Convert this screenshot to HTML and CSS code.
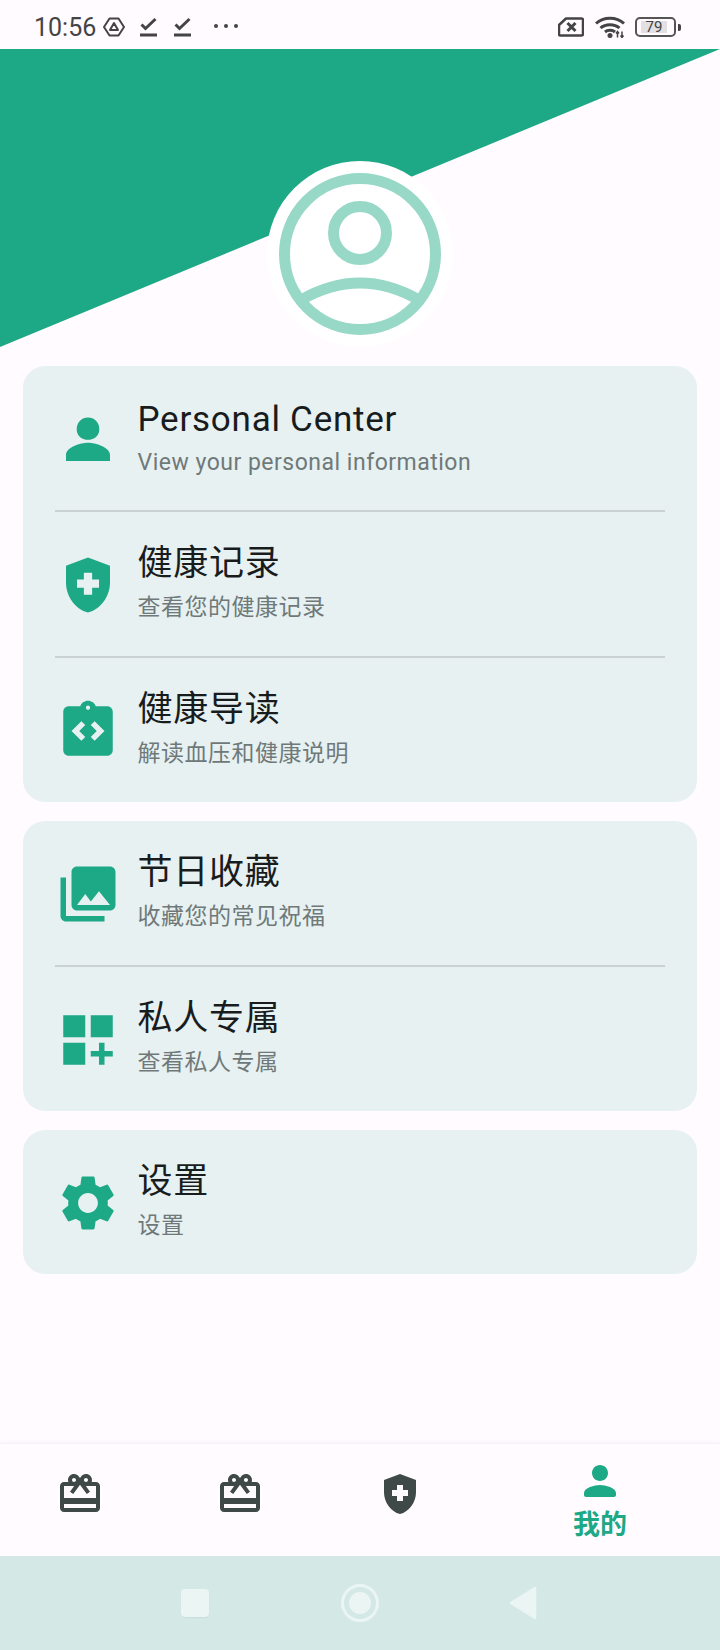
FILE: index.html
```html
<!DOCTYPE html>
<html lang="en">
<head>
    <meta charset="UTF-8">
    <meta name="viewport" content="width=device-width, initial-scale=1.0">
    <title>Profile</title>
    <link rel="stylesheet" href="styles.css">
</head>
<body>
    <div class="page">
        <div class="status-bar">
            <div class="status-left">
                <span class="clock">10:56</span>
                <svg class="st-hex" viewBox="0 0 22 20"><path d="M6.500 1.500h9L21 10l-5.500 8.500h-9L1 10z" fill="none" stroke="#444" stroke-width="2" stroke-linejoin="round"/><path d="M11 6l4 7H7z" fill="none" stroke="#444" stroke-width="2" stroke-linejoin="round"/></svg>
                <svg class="st-check" viewBox="0 0 17 20"><path d="M1.500 7.500l4 4L15.500 2" fill="none" stroke="#444" stroke-width="3"/><rect x="0" y="16.500" width="17" height="3" fill="#444"/></svg>
                <svg class="st-check" viewBox="0 0 17 20"><path d="M1.500 7.500l4 4L15.500 2" fill="none" stroke="#444" stroke-width="3"/><rect x="0" y="16.500" width="17" height="3" fill="#444"/></svg>
                <span class="st-dots"><i></i><i></i><i></i></span>
            </div>
            <div class="status-right">
                <svg class="st-sim" viewBox="0 0 26 20"><path d="M8 1.500h15.500a1.500 1.500 0 0 1 1.500 1.500v14a1.500 1.500 0 0 1-1.500 1.500H2.500A1.500 1.500 0 0 1 1 17V8z" fill="none" stroke="#444" stroke-width="2.500" stroke-linejoin="round"/><path d="M9.500 6l8 8M17.500 6l-8 8" stroke="#444" stroke-width="3"/></svg>
                <svg class="st-wifi" viewBox="0 0 30 22"><path d="M1 7.500C8.500 .5 21.500 .5 29 7.500" fill="none" stroke="#444" stroke-width="3"/><path d="M5.500 12C10.500 7.500 19.500 7.500 24.500 12" fill="none" stroke="#444" stroke-width="3"/><path d="M10 16c2.500-2.200 7.500-2.200 10 0" fill="none" stroke="#444" stroke-width="3"/><circle cx="15" cy="19.500" r="2.500" fill="#444"/><path d="M22.500 21.500v-6M21 17.500l1.500-2 1.500 2M27 15.500v6M25.500 19.500l1.500 2 1.500-2" fill="none" stroke="#444" stroke-width="1.500"/></svg>
                <div class="st-battery">
                    <span class="st-level">79</span>
                </div>
                <span class="st-nub"></span>
            </div>
        </div>

        <div class="header">
            <div class="avatar">
                <svg viewBox="0 0 186 186" width="186" height="186">
                    <circle cx="93" cy="93" r="75.500" fill="none" stroke="#98d8c7" stroke-width="11"/>
                    <circle cx="93" cy="72" r="26.500" fill="none" stroke="#98d8c7" stroke-width="11"/>
                    <path d="M34 139Q93 105 152 139" fill="none" stroke="#98d8c7" stroke-width="11"/>
                </svg>
            </div>
        </div>

        <div class="cards">
            <div class="card">
                <div class="row">
                    <svg class="row-icon" viewBox="0 0 24 24"><path d="M12 4.200a4.100 4.100 0 0 1 4.100 4.100v.300c0 2-1.800 3.700-4.100 3.700s-4.100-1.700-4.100-3.700v-.300A4.100 4.100 0 0 1 12 4.200zM4 20v-2.200c0-2.700 5.300-4.400 8-4.400s8 1.700 8 4.400V20z"/></svg>
                    <div class="row-text latin">
                        <div class="row-title">Personal Center</div>
                        <div class="row-sub">View your personal information</div>
                    </div>
                </div>
                <div class="row">
                    <svg class="row-icon" viewBox="0 0 24 24"><path fill-rule="evenodd" d="M10.500 13H8v-3h2.500V7.500h3V10H16v3h-2.500v2.500h-3V13zM12 2L4 5v6.090c0 5.050 3.410 9.760 8 10.910 4.590-1.150 8-5.860 8-10.910V5l-8-3z"/></svg>
                    <div class="row-text">
                        <div class="row-title">健康记录</div>
                        <div class="row-sub">查看您的健康记录</div>
                    </div>
                </div>
                <div class="row">
                    <svg class="row-icon" viewBox="0 0 24 24"><path fill-rule="evenodd" d="M19 3h-4.180C14.400 1.840 13.300 1 12 1s-2.400.840-2.820 2H5c-1.100 0-2 .900-2 2v14c0 1.100.900 2 2 2h14c1.100 0 2-.900 2-2V5c0-1.100-.900-2-2-2zm-7-.250c.410 0 .750.340.750.750s-.340.750-.750.750-.750-.340-.750-.750.340-.750.750-.750zM11 14.170l-1.410 1.420L6 12l3.590-3.590L11 9.830 8.830 12 11 14.170zm3.410 1.420L13 14.170 15.170 12 13 9.830l1.410-1.420L18 12l-3.590 3.590z"/></svg>
                    <div class="row-text">
                        <div class="row-title">健康导读</div>
                        <div class="row-sub">解读血压和健康说明</div>
                    </div>
                </div>
            </div>

            <div class="card">
                <div class="row">
                    <svg class="row-icon" viewBox="0 0 24 24"><path d="M22 16V4c0-1.100-.900-2-2-2H8c-1.100 0-2 .900-2 2v12c0 1.100.900 2 2 2h12c1.100 0 2-.900 2-2zm-11-4l2.030 2.710L16 11l4 5H8l3-4zM2 6v14c0 1.100.900 2 2 2h14v-2H4V6H2z" fill-rule="evenodd"/></svg>
                    <div class="row-text">
                        <div class="row-title">节日收藏</div>
                        <div class="row-sub">收藏您的常见祝福</div>
                    </div>
                </div>
                <div class="row">
                    <svg class="row-icon" viewBox="0 0 24 24"><path d="M3 3h8v8H3zm10 0h8v8h-8zM3 13h8v8H3zm15 0h-2v3h-3v2h3v3h2v-3h3v-2h-3z"/></svg>
                    <div class="row-text">
                        <div class="row-title">私人专属</div>
                        <div class="row-sub">查看私人专属</div>
                    </div>
                </div>
            </div>

            <div class="card">
                <div class="row">
                    <svg class="row-icon" viewBox="0 0 24 24"><path fill-rule="evenodd" d="M19.140 12.940c.040-.300.060-.610.060-.940 0-.320-.020-.640-.070-.940l2.030-1.580c.180-.140.230-.410.120-.610l-1.920-3.320c-.120-.220-.370-.290-.590-.220l-2.390.960c-.500-.380-1.030-.700-1.620-.940l-.360-2.540c-.040-.240-.240-.410-.480-.410h-3.840c-.240 0-.430.170-.470.410l-.360 2.540c-.590.240-1.130.570-1.620.940l-2.390-.960c-.220-.080-.470 0-.590.220L2.740 8.870c-.120.210-.080.470.120.610l2.030 1.580c-.050.300-.090.630-.090.940s.020.640.070.940l-2.030 1.580c-.180.140-.230.410-.12.610l1.920 3.320c.120.220.370.290.590.220l2.390-.960c.500.380 1.030.700 1.620.940l.360 2.540c.050.240.240.410.480.410h3.840c.240 0 .440-.170.470-.410l.360-2.540c.590-.240 1.130-.560 1.620-.940l2.390.960c.220.080.470 0 .590-.220l1.920-3.320c.120-.220.070-.470-.120-.610l-2.010-1.580zM12 15.600c-1.980 0-3.600-1.620-3.600-3.600s1.620-3.600 3.600-3.600 3.600 1.620 3.600 3.600-1.620 3.600-3.600 3.600z"/></svg>
                    <div class="row-text">
                        <div class="row-title">设置</div>
                        <div class="row-sub">设置</div>
                    </div>
                </div>
            </div>
        </div>

        <div class="nav">
            <div class="nav-item">
                <svg class="nav-icon" viewBox="0 0 24 24"><path fill-rule="evenodd" d="M20 6h-2.180c.110-.310.180-.650.180-1 0-1.660-1.340-3-3-3-1.050 0-1.960.540-2.500 1.350l-.500.670-.500-.680C10.960 2.540 10.050 2 9 2 7.340 2 6 3.340 6 5c0 .350.070.690.180 1H4c-1.110 0-1.990.890-1.990 2L2 19c0 1.110.890 2 2 2h16c1.110 0 2-.890 2-2V8c0-1.110-.890-2-2-2zm-5-2c.550 0 1 .450 1 1s-.450 1-1 1-1-.450-1-1 .450-1 1-1zM9 4c.550 0 1 .450 1 1s-.450 1-1 1-1-.450-1-1 .450-1 1-1zm11 15H4v-2h16v2zm0-5H4V8h5.080L7 10.830 8.620 12 11 8.760l1-1.360 1 1.360L15.380 12 17 10.830 14.920 8H20v6z"/></svg>
            </div>
            <div class="nav-item">
                <svg class="nav-icon" viewBox="0 0 24 24"><path fill-rule="evenodd" d="M20 6h-2.180c.110-.310.180-.650.180-1 0-1.660-1.340-3-3-3-1.050 0-1.960.540-2.500 1.350l-.500.670-.500-.680C10.960 2.540 10.050 2 9 2 7.340 2 6 3.340 6 5c0 .350.070.690.180 1H4c-1.110 0-1.990.890-1.990 2L2 19c0 1.110.890 2 2 2h16c1.110 0 2-.890 2-2V8c0-1.110-.890-2-2-2zm-5-2c.550 0 1 .450 1 1s-.450 1-1 1-1-.450-1-1 .450-1 1-1zM9 4c.550 0 1 .450 1 1s-.450 1-1 1-1-.450-1-1 .450-1 1-1zm11 15H4v-2h16v2zm0-5H4V8h5.080L7 10.830 8.620 12 11 8.760l1-1.360 1 1.360L15.380 12 17 10.830 14.920 8H20v6z"/></svg>
            </div>
            <div class="nav-item">
                <svg class="nav-icon" viewBox="0 0 24 24"><path fill-rule="evenodd" d="M10.500 13H8v-3h2.500V7.500h3V10H16v3h-2.500v2.500h-3V13zM12 2L4 5v6.090c0 5.050 3.410 9.760 8 10.910 4.590-1.150 8-5.860 8-10.910V5l-8-3z"/></svg>
            </div>
            <div class="nav-item active">
                <svg class="nav-icon" viewBox="0 0 24 24"><path d="M12 12c2.210 0 4-1.790 4-4s-1.790-4-4-4-4 1.790-4 4 1.790 4 4 4zm0 2c-2.670 0-8 1.340-8 4v1c0 .550.450 1 1 1h14c.550 0 1-.450 1-1v-1c0-2.660-5.330-4-8-4z"/></svg>
                <span class="nav-label">我的</span>
            </div>
        </div>

        <div class="sys-bar">
            <span class="sys-square"></span>
            <span class="sys-home"><i></i></span>
            <svg class="sys-back" viewBox="0 0 28 34"><path d="M26 2L2 17l24 15z" fill="#ebf5f3" stroke="#ebf5f3" stroke-width="2.500" stroke-linejoin="round"/></svg>
        </div>
    </div>
</body>
</html>
```

FILE: styles.css
```css
* {
    box-sizing: border-box;
}
body {
    margin: 0;
    background-color: #fffbff;
    font-family: Roboto, "Noto Sans CJK SC", sans-serif;
}
.page {
    width: 720px;
    height: 1650px;
    display: flex;
    flex-direction: column;
    overflow: hidden;
}

/* status bar */
.status-bar {
    height: 49px;
    flex: none;
    padding: 5px 39px 0 34px;
    display: flex;
    justify-content: space-between;
    align-items: center;
    color: #444;
}
.status-left,
.status-right {
    display: flex;
    align-items: center;
}
.clock {
    font-size: 25px;
    width: 69px;
}
.st-hex {
    width: 22px;
    height: 20px;
    margin-right: 15px;
}
.st-check {
    width: 17px;
    height: 20px;
    margin-right: 17px;
}
.st-dots {
    display: flex;
    gap: 6px;
    margin-left: 6px;
    margin-bottom: 3px;
}
.st-dots i {
    width: 4px;
    height: 4px;
    border-radius: 50%;
    background: #444;
}
.st-sim {
    width: 26px;
    height: 20px;
    margin-right: 11px;
}
.st-wifi {
    width: 30px;
    height: 22px;
    margin-right: 10px;
}
.st-battery {
    width: 41px;
    height: 20px;
    border: 2px solid #555;
    border-radius: 5px;
    display: flex;
    align-items: center;
    padding-left: 4px;
}
.st-level {
    width: 26px;
    height: 12px;
    background: #e2e0e2;
    color: #444;
    font-size: 15px;
    line-height: 12px;
    text-align: center;
}
.st-nub {
    width: 3px;
    height: 7px;
    margin-left: 2px;
    background: #444;
    border-radius: 0 2px 2px 0;
}

/* slanted header */
.header {
    height: 317px;
    flex: none;
    position: relative;
    display: flex;
    justify-content: center;
    padding-top: 112px;
}
.header::before {
    content: "";
    position: absolute;
    left: 0;
    top: 0;
    width: 720px;
    height: 298px;
    background: #1da886;
    clip-path: polygon(0 0, 100% 0, 0 100%);
}
.avatar {
    position: relative;
    width: 186px;
    height: 186px;
    border-radius: 50%;
    background: #fff;
}

/* menu cards */
.cards {
    display: flex;
    flex-direction: column;
    gap: 19px;
    padding: 0 23px;
}
.card {
    background: #e7f1f2;
    border-radius: 22px;
}
.row {
    height: 144px;
    margin: 0 32px;
    display: flex;
    align-items: center;
}
.row + .row {
    border-top: 2px solid #c9d2d1;
    height: 146px;
}
.row-icon {
    width: 66px;
    height: 66px;
    margin: 2px 16.5px 0 0;
    flex: none;
    fill: #1da886;
}
.row-text {
    display: flex;
    flex-direction: column;
    gap: 5px;
    padding-bottom: 4px;
}
.row-text.latin {
    gap: 4px;
    padding-bottom: 1px;
}
.row-title {
    font-size: 35px;
    line-height: 46px;
    letter-spacing: 0.75px;
    color: #191c1d;
}
.row-sub {
    font-size: 23px;
    line-height: 32px;
    letter-spacing: 0.5px;
    color: #6f7979;
}

/* bottom nav */
.nav {
    height: 113px;
    margin-top: auto;
    flex: none;
    display: flex;
    border-top: 1px solid #f6f1f5;
    box-shadow: 0 -2px 3px rgba(120, 100, 120, 0.04);
}
.nav-item {
    flex: 2;
    display: flex;
    flex-direction: column;
    align-items: center;
    padding-top: 26px;
}
.nav-item.active {
    flex: 3;
    padding-top: 13px;
}
.nav-icon {
    width: 48px;
    height: 48px;
    fill: #3f4948;
}
.active .nav-icon {
    fill: #1da886;
}
.nav-label {
    font-size: 27px;
    line-height: 36px;
    font-weight: 700;
    margin-top: 2px;
    color: #1da886;
}

/* system buttons */
.sys-bar {
    height: 94px;
    flex: none;
    background: #d4e8e5;
    display: flex;
    align-items: center;
    position: relative;
    padding-left: 181px;
}
.sys-square {
    width: 28px;
    height: 28px;
    border-radius: 4px;
    background: #ebf5f3;
    box-shadow: 0 1px 1px rgba(0, 0, 0, 0.05);
}
.sys-home {
    width: 38px;
    height: 38px;
    margin-left: 132px;
    border: 3px solid #ebf5f3;
    border-radius: 50%;
    display: flex;
    align-items: center;
    justify-content: center;
}
.sys-home i {
    width: 22px;
    height: 22px;
    border-radius: 50%;
    background: #ebf5f3;
}
.sys-back {
    width: 28px;
    height: 34px;
    margin-left: 130px;
}
```
